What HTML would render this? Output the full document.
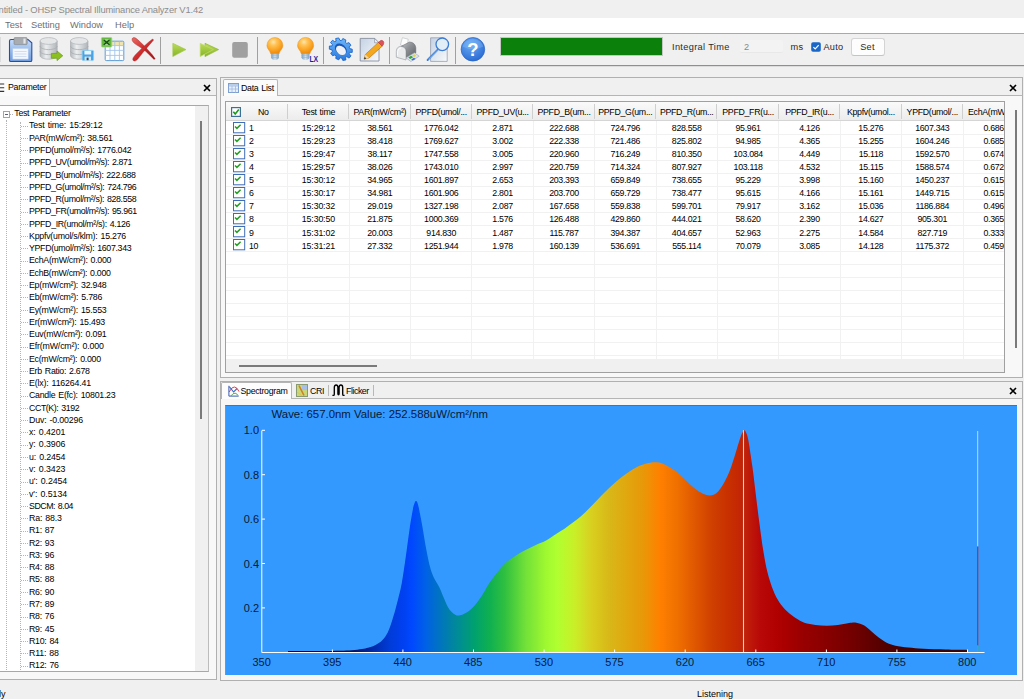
<!DOCTYPE html>
<html lang="en"><head><meta charset="utf-8"><title>OHSP Spectral Illuminance Analyzer V1.42</title>
<style>
html,body{margin:0;padding:0;}
body{width:1024px;height:699px;overflow:hidden;background:#f0f0f0;position:relative;font-family:"Liberation Sans",sans-serif;font-size:8.8px;color:#000;}
.a{position:absolute;white-space:nowrap;}
.t{position:absolute;white-space:nowrap;font-size:8.8px;letter-spacing:-0.3px;word-spacing:0.8px;line-height:12px;color:#000;}
#title{left:-8px;top:3.5px;font-size:9.4px;color:#8c8c8c;letter-spacing:-0.16px;line-height:12px;}
#menubar{left:0;top:18px;width:1024px;height:15px;background:#fff;}
.menu{position:absolute;top:1px;font-size:9.3px;color:#707070;line-height:12px;}
#tbtop{left:0;top:33px;width:1024px;height:1px;background:#a9a9a9;}
#tbbot{left:0;top:65px;width:1024px;height:1px;background:#8f8f8f;}
#tbbot2{left:0;top:66px;width:1024px;height:1px;background:#dcdcdc;}
.sep{position:absolute;top:37px;width:1px;height:27px;background:#a0a0a0;}
/* left panel */
#lp{left:-1px;top:78px;width:218px;height:602px;border:1px solid #b0b0b0;box-sizing:border-box;background:#f0f0f0;}
#lptab{left:0;top:79px;width:50px;height:17px;background:#fbfbfb;border-right:1px solid #b5b5b5;box-sizing:border-box;}
#lp:after{content:"";position:absolute;left:50px;top:16px;width:166px;height:1px;background:#b5b5b5;}
#lp:before{content:"";position:absolute;left:0;top:17px;width:216px;height:583px;background:#f8f8f8;}
.xbtn{position:absolute;width:8px;height:8px;}
.xbtn svg{display:block;}
#tree{left:-1px;top:104.5px;width:210px;height:567.5px;border:1px solid #a8a8a8;border-right-color:#bcbcbc;box-sizing:border-box;background:#fff;overflow:hidden;}
#tree .t{margin-left:1px;margin-top:-1.5px;}
.vl{position:absolute;width:0;border-left:1px dotted #b4b4b4;}
.hl{position:absolute;height:0;border-top:1px dotted #b4b4b4;}
.box{position:absolute;width:7px;height:7px;border:1px solid #a4a4a4;box-sizing:border-box;background:#fff;}
.box i{position:absolute;left:1px;top:2px;width:3px;height:1px;background:#5a6070;}
#tsb{left:195px;top:0;width:14px;height:566px;background:#f0f0f0;}
.thumb{position:absolute;width:1.5px;background:#7a7a7a;}
/* right panels */
#rp1{left:220px;top:77px;width:803px;height:301px;border:1px solid #b0b0b0;box-sizing:border-box;background:#f0f0f0;}
#rp1:before{content:"";position:absolute;left:0;top:18px;width:801px;height:281px;background:#f8f8f8;}
#rp1:after{content:"";position:absolute;left:57px;top:17px;width:745px;height:1px;background:#b5b5b5;}
#dltab{left:223px;top:79px;width:55px;height:17px;background:#fbfbfb;border:1px solid #b5b5b5;border-bottom:none;box-sizing:border-box;border-radius:2px 2px 0 0;}
#list{left:225px;top:101px;width:780px;height:272px;border:1px solid #a0a0a0;box-sizing:border-box;background:#fff;overflow:hidden;}
#lhead{left:0;top:0;width:780px;height:19px;background:linear-gradient(#fafafa,#ececec);border-bottom:1px solid #d5d5d5;box-sizing:border-box;}
.hc{top:3.8px;text-align:center;}
.cc{text-align:center;}
.hsep{position:absolute;top:2px;width:1px;height:15px;background:#cfcfcf;}
.gv{position:absolute;top:19px;width:1px;height:238px;background:#f1f1f1;}
.gh{position:absolute;left:0;width:780px;height:1px;background:#f1f1f1;}
#hsb{left:0;top:257px;width:778px;height:13px;background:#f0f0f0;}
.hthumb{position:absolute;left:13px;top:6px;width:138px;height:1.5px;background:#7a7a7a;}
#rp2{left:220px;top:381px;width:803px;height:300px;border:1px solid #b0b0b0;box-sizing:border-box;background:#f0f0f0;}
#rp2:after{content:"";position:absolute;left:0px;top:16px;width:802px;height:1px;background:#b5b5b5;}
#cwhite{left:221px;top:399px;width:801px;height:281px;background:#f8f6f4;}
#sptab{left:220.5px;top:382px;width:71.5px;height:17px;background:#fdfdfd;border:1px solid #b5b5b5;border-bottom:none;box-sizing:border-box;border-radius:2px 2px 0 0;}
#chart{border-top:1px solid #5a6f8c;border-left:1px solid #7f93ad;box-sizing:content-box;}
.tb{font-size:9.2px;line-height:12px;color:#2a2a2a;}
</style></head>
<body>
<div id="title" class="a">Untitled - OHSP Spectral Illuminance Analyzer V1.42</div>
<div id="menubar" class="a"><span class="menu" style="left:5px">Test</span><span class="menu" style="left:31px">Setting</span><span class="menu" style="left:70px">Window</span><span class="menu" style="left:115px">Help</span></div>
<div id="tbtop" class="a"></div><div id="tbbot" class="a"></div><div id="tbbot2" class="a"></div>
<div class="sep" style="left:160px"></div><div class="sep" style="left:257px"></div><div class="sep" style="left:323px"></div><div class="sep" style="left:389px"></div><div class="sep" style="left:455px"></div>
<svg id="tbicons" class="a" style="left:0;top:34px" width="500" height="31" viewBox="0 34 500 31">
<defs>
<linearGradient id="gfl" x1="0" y1="0" x2="0" y2="1"><stop offset="0" stop-color="#c4dcfa"/><stop offset="1" stop-color="#6c9ce0"/></linearGradient>
<linearGradient id="gcy" x1="0" y1="0" x2="1" y2="0"><stop offset="0" stop-color="#b4b8bc"/><stop offset=".35" stop-color="#eceef0"/><stop offset="1" stop-color="#b0b4b8"/></linearGradient>
<linearGradient id="ggr" x1="0" y1="0" x2="0" y2="1"><stop offset="0" stop-color="#bcdc5c"/><stop offset="1" stop-color="#86b424"/></linearGradient>
<radialGradient id="gbu" cx=".4" cy=".28" r=".7"><stop offset="0" stop-color="#ffe6b0"/><stop offset=".3" stop-color="#ffc458"/><stop offset=".7" stop-color="#fba424"/><stop offset="1" stop-color="#ee8c10"/></radialGradient>
<linearGradient id="gbb" x1="0" y1="0" x2="1" y2="0"><stop offset="0" stop-color="#7aa0c0"/><stop offset=".5" stop-color="#cfe2f2"/><stop offset="1" stop-color="#7aa0c0"/></linearGradient>
<linearGradient id="ggear" x1="0" y1="0" x2="1" y2="1"><stop offset="0" stop-color="#7cc4ff"/><stop offset="1" stop-color="#1c6cd8"/></linearGradient>
<radialGradient id="ghelp" cx=".4" cy=".3" r=".8"><stop offset="0" stop-color="#6cacf4"/><stop offset="1" stop-color="#2264d0"/></radialGradient>
<linearGradient id="gdoc" x1="0" y1="0" x2="1" y2="1"><stop offset="0" stop-color="#c4d2e4"/><stop offset="1" stop-color="#f8fafc"/></linearGradient>
<linearGradient id="gred" x1="0" y1="0" x2="1" y2="1"><stop offset="0" stop-color="#ec6c64"/><stop offset=".5" stop-color="#cc2c2c"/><stop offset="1" stop-color="#a01010"/></linearGradient>
<linearGradient id="gprt" x1="0" y1="0" x2="1" y2="1"><stop offset="0" stop-color="#c4c8cc"/><stop offset=".45" stop-color="#8c9094"/><stop offset="1" stop-color="#5c6064"/></linearGradient>
</defs>
<!-- grip -->
<rect x="0" y="37" width="1" height="25" fill="#dcdcdc"/>
<!-- floppy save -->
<g>
<path d="M11 39.5H28L31.8 42.8V60.2Q31.8 61.5 30.5 61.5H10.8Q9.5 61.5 9.5 60.2V41Q9.5 39.5 11 39.5Z" fill="url(#gfl)" stroke="#2c4c9c" stroke-width="1.1"/>
<rect x="14" y="37.6" width="13.2" height="7" rx="1" fill="#a8acb0" stroke="#808488" stroke-width=".6"/>
<rect x="23.4" y="38.6" width="2.2" height="5" fill="#e4e6e8"/>
<rect x="12.8" y="48.3" width="15.4" height="10.8" fill="#f4f8fe" stroke="#b4c8ec" stroke-width=".6"/>
<path d="M14.5 51.5H26.5M14.5 54H26.5M14.5 56.5H26.5" stroke="#c0d0ea" stroke-width=".7"/>
</g>
<!-- database + arrow -->
<g>
<path d="M40 41V55.5C40 57.6 43.9 59.2 48.6 59.2S57.2 57.6 57.2 55.5V41Z" fill="url(#gcy)" stroke="#a4a8ac" stroke-width=".6"/>
<path d="M40 46C40 48 43.9 49.6 48.6 49.6S57.2 48 57.2 46M40 51C40 53 43.9 54.6 48.6 54.6S57.2 53 57.2 51" fill="none" stroke="#a8acb0" stroke-width=".8"/>
<ellipse cx="48.6" cy="41" rx="8.6" ry="3.4" fill="#e4e6e8" stroke="#b0b4b8" stroke-width=".7"/>
<path d="M51.3 53.4H57V51L62.8 55.8L57 60.6V58.2H51.3Z" fill="#8cc020" stroke="#6c9c14" stroke-width=".7"/>
</g>
<!-- database + floppy -->
<g>
<path d="M70.5 41V55.5C70.5 57.6 74.4 59.2 79.2 59.2S88 57.6 88 55.5V41Z" fill="url(#gcy)" stroke="#a4a8ac" stroke-width=".6"/>
<path d="M70.5 46C70.5 48 74.4 49.6 79.2 49.6S88 48 88 46M70.5 51C70.5 53 74.4 54.6 79.2 54.6S88 53 88 51" fill="none" stroke="#a8acb0" stroke-width=".8"/>
<ellipse cx="79.2" cy="41" rx="8.7" ry="3.4" fill="#e4e6e8" stroke="#b0b4b8" stroke-width=".7"/>
<rect x="82.2" y="50.4" width="11.4" height="10.2" rx="1" fill="#48a4e4" stroke="#8cd0f4" stroke-width=".7"/>
<rect x="84.4" y="50.9" width="6.8" height="3.6" fill="#e8f4fc"/>
<rect x="84.6" y="56.6" width="6.4" height="4" fill="#d0e8f8"/><rect x="86.6" y="57.6" width="2" height="2.6" fill="#384858"/>
</g>
<!-- excel table -->
<g>
<rect x="105.2" y="41.2" width="18.6" height="19.4" rx="1" fill="#fcfeff" stroke="#5c9cd4" stroke-width="1"/>
<rect x="106" y="42" width="17" height="3.4" fill="#f0e4b0"/>
<path d="M105.5 45.6H123.5M105.5 50.4H123.5M105.5 55.4H123.5M110 41.5V60.3M114.8 41.5V60.3M119.4 41.5V60.3" stroke="#a4c4e8" stroke-width=".9"/>
<rect x="101.4" y="37.5" width="10.4" height="9.6" rx="1" fill="#64b840" stroke="#a4d884" stroke-width=".8"/>
<path d="M103.2 40H110M103.2 44.8H110" stroke="#d8f0c8" stroke-width=".9"/><path d="M103.6 39.8L109.6 45M109.6 39.8L103.6 45" stroke="#184c18" stroke-width="1.3"/>
</g>
<!-- red X -->
<g>
<path d="M132.1 38.9C132.6 37.4 134.6 37.2 136 38.3C139 40.6 142 43.8 144.8 46.4L152.3 54.8L155.2 58.8L154 59.4L148.5 54C146 51.6 144 49.8 141.9 48.3L135.4 44.1C133.6 42.8 131.6 40.6 132.1 38.9Z" fill="url(#gred)" stroke="#a01c1c" stroke-width=".4"/>
<path d="M152.6 39L153.6 40L148.5 45.9L142.9 52.6L138.2 58.6C137 60 135.6 61.2 134.2 61C132.6 60.8 132.4 59 133.5 57.2C134.6 55.6 135.8 54.4 137.2 53L142.9 47.3L148.5 42.2Z" fill="url(#gred)" stroke="#a01c1c" stroke-width=".4"/>
</g>
<!-- play -->
<path d="M172.8 43.3L186 49.6L172.8 56.6Z" fill="url(#ggr)" stroke="#a0c848" stroke-width=".6" stroke-linejoin="round"/>
<!-- ff -->
<path d="M205 43.3L218.6 49.6L205 56.6Z" fill="url(#ggr)" stroke="#88b028" stroke-width=".6" stroke-linejoin="round"/>
<path d="M200.2 43.3L213.4 49.6L200.2 56.6Z" fill="url(#ggr)" stroke="#c4dc70" stroke-width=".7" stroke-linejoin="round"/>
<!-- stop -->
<rect x="232.2" y="42.1" width="15.6" height="15.6" rx="2" fill="#a0a0a0"/>
<!-- bulb -->
<g>
<path d="M271.2 53H278.8V57.2C278.8 59 277.2 59.9 275 59.9S271.2 59 271.2 57.2Z" fill="url(#gbb)"/>
<path d="M270.8 55.2H279.2M271 57.4H279" stroke="#8cb0cc" stroke-width=".6"/>
<path d="M274.9 37.5a8 8 0 0 1 8 8c0 3.4-3.2 5-3.7 8.2h-8.6c-.5-3.2-3.7-4.8-3.7-8.2a8 8 0 0 1 8-8z" fill="url(#gbu)" stroke="#ec9420" stroke-width=".5"/>
</g>
<!-- bulb LX -->
<g>
<path d="M301.6 53H309.4V57.2C309.4 59 307.6 59.9 305.5 59.9S301.6 59 301.6 57.2Z" fill="url(#gbb)"/>
<path d="M301.2 55.2H309.2M301.4 57.4H309" stroke="#8cb0cc" stroke-width=".6"/>
<path d="M305.6 37.4a8.1 8.1 0 0 1 8.1 8.1c0 3.4-3.2 5-3.7 8.2h-8.8c-.5-3.2-3.7-4.8-3.7-8.2a8.1 8.1 0 0 1 8.1-8.1z" fill="url(#gbu)" stroke="#ec9420" stroke-width=".5"/>
<text x="309.4" y="61.7" font-family="'Liberation Sans',sans-serif" font-weight="bold" font-size="8.2px" fill="#1c1ca4" textLength="8.8" lengthAdjust="spacingAndGlyphs">LX</text>
</g>
<!-- gear -->
<g transform="translate(340.8 49.2) rotate(40) scale(1 .86)">
<path d="M9.4 -2.2L12.1 -1.7L12.1 1.7L9.4 2.2L8.8 3.8L10.8 5.7L8.8 8.5L6.3 7.2L4.9 8.2L5.3 11.0L2.1 12.0L0.8 9.6L-0.8 9.6L-2.1 12.0L-5.3 11.0L-4.9 8.2L-6.3 7.2L-8.8 8.5L-10.8 5.7L-8.8 3.8L-9.4 2.2L-12.1 1.7L-12.1 -1.7L-9.4 -2.2L-8.8 -3.8L-10.8 -5.7L-8.8 -8.5L-6.3 -7.2L-4.9 -8.2L-5.3 -11.0L-2.1 -12.0L-0.8 -9.6L0.8 -9.6L2.1 -12.0L5.3 -11.0L4.9 -8.2L6.3 -7.2L8.8 -8.5L10.8 -5.7L8.8 -3.8Z" fill="url(#ggear)" stroke="#1c68cc" stroke-width=".9" stroke-linejoin="round"/>
<ellipse cx="0" cy="0" rx="6.6" ry="5.6" fill="#1858b8"/>
<ellipse cx=".9" cy=".9" rx="5.6" ry="4.6" fill="#eef1f5"/>
</g>
<!-- doc + pencil -->
<g>
<path d="M360.2 38.4H374.6L379 42.8V61H360.2Z" fill="url(#gdoc)" stroke="#7c8494" stroke-width=".8"/>
<path d="M374.6 38.4V42.8H379Z" fill="#eef2f8" stroke="#7c8494" stroke-width=".6"/>
<path d="M364 59.2L365.4 54.4L378.4 42.4L382.2 46.2L369 58Z" fill="#f4a820" stroke="#a86c10" stroke-width=".6"/>
<path d="M378.4 42.4L380.6 40.6Q382 39.8 383.2 41.2L383.8 42.4Q384.2 43.8 382.2 46.2Z" fill="#e05058" stroke="#a83038" stroke-width=".5"/>
<path d="M364 59.2L365.4 54.4L369 58Z" fill="#f0d8a8"/><path d="M364 59.2L364.7 56.9L366.3 58.5Z" fill="#202020"/>
</g>
<!-- printer -->
<g>
<path d="M400.4 45L402.4 37.7L408.2 39.2L407.2 46.5Z" fill="#fdfdfd" stroke="#b8bcc0" stroke-width=".6"/>
<path d="M401 46.4L409.6 42Q415.2 42.4 415.8 47.8V52.8L406 58.2V51Q405.6 46.8 401 46.4Z" fill="url(#gprt)" stroke="#5c6064" stroke-width=".5"/>
<path d="M396.3 51.2Q396.6 46.6 401 46.4Q405.6 46.8 406 51V60L396.3 57.2Z" fill="#e9ebed" stroke="#94989c" stroke-width=".6"/>
<path d="M397.6 55.4V51.6Q398 48.2 401 48" fill="none" stroke="#fff" stroke-width=".8"/>
<path d="M406 57.8L414.4 52.8L419.2 56.2L410.8 61.5Z" fill="#dde4f0" stroke="#98a2b6" stroke-width=".6"/>
<path d="M408.2 57.6L411.2 55.8L413.2 57.2L410.2 59Z" fill="#34a834"/><path d="M412 55.4L414.2 54.2L416.4 55.8L414.2 57Z" fill="#e4d43c"/><path d="M411.2 59.4L414 57.8L415.6 58.9L412.8 60.5Z" fill="#3c6cd4"/>
</g>
<!-- preview (doc + magnifier) -->
<g>
<path d="M430.6 37.8H443.4L447.2 41.6V61.4H430.6Z" fill="url(#gdoc)" stroke="#8c94a4" stroke-width=".7"/>
<circle cx="442.3" cy="44.3" r="6.3" fill="#e2eef8" fill-opacity=".85" stroke="#3c7cd4" stroke-width="1.3"/>
<path d="M438 49.4L427.6 60" stroke="#3c7cd4" stroke-width="1.9" stroke-linecap="round"/>
<path d="M438 49.6L428.4 59.4" stroke="#9cc4f0" stroke-width=".7"/>
</g>
<!-- help -->
<g>
<circle cx="472.9" cy="49.3" r="11.8" fill="url(#ghelp)" stroke="#2a64c4" stroke-width=".7"/>
<path d="M462.4 46.6A11 11 0 0 1 483.4 46.6Q473 52 462.4 46.6Z" fill="#8cc0f8" fill-opacity=".35"/>
<text x="472.9" y="56" text-anchor="middle" font-family="'Liberation Sans',sans-serif" font-weight="bold" font-size="18.5px" fill="#fff">?</text>
</g>
</svg>
<div class="a" style="left:500px;top:37px;width:163px;height:19px;background:#0b800b;border:1px solid #c4c8c4;box-sizing:border-box"></div>
<span class="a tb" style="left:672px;top:41px;letter-spacing:.35px">Integral Time</span>
<div class="a" style="left:740px;top:40px;width:43px;height:13px;background:#f3f3f3;border-bottom:1px solid #e8e8e8;box-sizing:border-box;border-radius:2px"></div>
<span class="a tb" style="left:744px;top:41px;color:#8a8a8a">2</span>
<span class="a tb" style="left:790.5px;top:41px;letter-spacing:.3px">ms</span>
<svg class="a" style="left:811px;top:42px" width="10" height="10" viewBox="0 0 10 10"><rect x=".2" y=".2" width="9.6" height="9.6" rx="1.8" fill="#1a66c8"/><path d="M2.4 5.1L4.2 6.9L7.7 3.2" fill="none" stroke="#fff" stroke-width="1.2"/></svg>
<span class="a tb" style="left:823.5px;top:41px;letter-spacing:.2px">Auto</span>
<div class="a" style="left:850.5px;top:38px;width:34px;height:17.5px;background:#fdfdfd;border:1px solid #d4d4d4;border-bottom-color:#c4c4c4;box-sizing:border-box;border-radius:3px"></div>
<span class="a tb" style="left:850.5px;top:41px;width:34px;text-align:center;letter-spacing:.2px">Set</span>
<div id="lp" class="a"></div>
<div id="lptab" class="a"><svg class="a" style="left:0;top:4.4px" width="5" height="10" viewBox="0 0 5 10"><path d="M0 1h4.2M0 4.7h4.2M0 8.4h4.2" stroke="#333" stroke-width="1.1"/></svg><span class="t" style="left:8px;top:2px">Parameter</span></div>
<div class="xbtn" style="left:203.3px;top:83.5px"><svg width="8" height="8" viewBox="0 0 8 8"><path d="M1 1L7 7M7 1L1 7" stroke="#000" stroke-width="1.7"/></svg></div>
<div id="tree" class="a">
<div class="vl" style="left:6px;top:14.2px;height:580.0px"></div><div class="vl" style="left:20px;top:16.2px;height:580.0px"></div><div class="box" style="left:3px;top:5.0px"><i></i></div><div class="hl" style="left:10px;top:8.0px;width:3px"></div><span class="t" style="left:13.3px;top:3.20px">Test Parameter</span>
<div class="hl" style="left:21px;top:20.2px;width:6.5px"></div><span class="t" style="left:28px;top:15.47px;letter-spacing:-0.13px">Test time: 15:29:12</span>
<div class="hl" style="left:21px;top:32.4px;width:6.5px"></div><span class="t" style="left:28px;top:27.74px;letter-spacing:-0.26px">PAR(mW/cm²): 38.561</span>
<div class="hl" style="left:21px;top:44.7px;width:6.5px"></div><span class="t" style="left:28px;top:40.01px;letter-spacing:-0.32px">PPFD(umol/m²/s): 1776.042</span>
<div class="hl" style="left:21px;top:57.0px;width:6.5px"></div><span class="t" style="left:28px;top:52.28px;letter-spacing:-0.39px">PPFD_UV(umol/m²/s): 2.871</span>
<div class="hl" style="left:21px;top:69.2px;width:6.5px"></div><span class="t" style="left:28px;top:64.55px;letter-spacing:-0.37px">PPFD_B(umol/m²/s): 222.688</span>
<div class="hl" style="left:21px;top:81.5px;width:6.5px"></div><span class="t" style="left:28px;top:76.82px;letter-spacing:-0.38px">PPFD_G(umol/m²/s): 724.796</span>
<div class="hl" style="left:21px;top:93.8px;width:6.5px"></div><span class="t" style="left:28px;top:89.09px;letter-spacing:-0.36px">PPFD_R(umol/m²/s): 828.558</span>
<div class="hl" style="left:21px;top:106.1px;width:6.5px"></div><span class="t" style="left:28px;top:101.36px;letter-spacing:-0.36px">PPFD_FR(umol/m²/s): 95.961</span>
<div class="hl" style="left:21px;top:118.3px;width:6.5px"></div><span class="t" style="left:28px;top:113.63px;letter-spacing:-0.33px">PPFD_IR(umol/m²/s): 4.126</span>
<div class="hl" style="left:21px;top:130.6px;width:6.5px"></div><span class="t" style="left:28px;top:125.90px;letter-spacing:-0.24px">Kppfv(umol/s/klm): 15.276</span>
<div class="hl" style="left:21px;top:142.9px;width:6.5px"></div><span class="t" style="left:28px;top:138.17px;letter-spacing:-0.32px">YPFD(umol/m²/s): 1607.343</span>
<div class="hl" style="left:21px;top:155.1px;width:6.5px"></div><span class="t" style="left:28px;top:150.44px;letter-spacing:-0.27px">EchA(mW/cm²): 0.000</span>
<div class="hl" style="left:21px;top:167.4px;width:6.5px"></div><span class="t" style="left:28px;top:162.71px;letter-spacing:-0.30px">EchB(mW/cm²): 0.000</span>
<div class="hl" style="left:21px;top:179.7px;width:6.5px"></div><span class="t" style="left:28px;top:174.98px;letter-spacing:-0.25px">Ep(mW/cm²): 32.948</span>
<div class="hl" style="left:21px;top:191.9px;width:6.5px"></div><span class="t" style="left:28px;top:187.25px;letter-spacing:-0.23px">Eb(mW/cm²): 5.786</span>
<div class="hl" style="left:21px;top:204.2px;width:6.5px"></div><span class="t" style="left:28px;top:199.52px;letter-spacing:-0.22px">Ey(mW/cm²): 15.553</span>
<div class="hl" style="left:21px;top:216.5px;width:6.5px"></div><span class="t" style="left:28px;top:211.79px;letter-spacing:-0.22px">Er(mW/cm²): 15.493</span>
<div class="hl" style="left:21px;top:228.8px;width:6.5px"></div><span class="t" style="left:28px;top:224.06px;letter-spacing:-0.22px">Euv(mW/cm²): 0.091</span>
<div class="hl" style="left:21px;top:241.0px;width:6.5px"></div><span class="t" style="left:28px;top:236.33px;letter-spacing:-0.16px">Efr(mW/cm²): 0.000</span>
<div class="hl" style="left:21px;top:253.3px;width:6.5px"></div><span class="t" style="left:28px;top:248.60px;letter-spacing:-0.28px">Ec(mW/cm²): 0.000</span>
<div class="hl" style="left:21px;top:265.6px;width:6.5px"></div><span class="t" style="left:28px;top:260.87px;letter-spacing:-0.28px">Erb Ratio: 2.678</span>
<div class="hl" style="left:21px;top:277.8px;width:6.5px"></div><span class="t" style="left:28px;top:273.14px;letter-spacing:-0.17px">E(lx): 116264.41</span>
<div class="hl" style="left:21px;top:290.1px;width:6.5px"></div><span class="t" style="left:28px;top:285.41px;letter-spacing:-0.26px">Candle E(fc): 10801.23</span>
<div class="hl" style="left:21px;top:302.4px;width:6.5px"></div><span class="t" style="left:28px;top:297.68px;letter-spacing:-0.41px">CCT(K): 3192</span>
<div class="hl" style="left:21px;top:314.6px;width:6.5px"></div><span class="t" style="left:28px;top:309.95px;letter-spacing:-0.17px">Duv: -0.00296</span>
<div class="hl" style="left:21px;top:326.9px;width:6.5px"></div><span class="t" style="left:28px;top:322.22px;letter-spacing:-0.08px">x: 0.4201</span>
<div class="hl" style="left:21px;top:339.2px;width:6.5px"></div><span class="t" style="left:28px;top:334.49px;letter-spacing:-0.08px">y: 0.3906</span>
<div class="hl" style="left:21px;top:351.5px;width:6.5px"></div><span class="t" style="left:28px;top:346.76px;letter-spacing:-0.13px">u: 0.2454</span>
<div class="hl" style="left:21px;top:363.7px;width:6.5px"></div><span class="t" style="left:28px;top:359.03px;letter-spacing:-0.08px">v: 0.3423</span>
<div class="hl" style="left:21px;top:376.0px;width:6.5px"></div><span class="t" style="left:28px;top:371.30px;letter-spacing:-0.11px">u': 0.2454</span>
<div class="hl" style="left:21px;top:388.3px;width:6.5px"></div><span class="t" style="left:28px;top:383.57px;letter-spacing:-0.06px">v': 0.5134</span>
<div class="hl" style="left:21px;top:400.5px;width:6.5px"></div><span class="t" style="left:28px;top:395.84px;letter-spacing:-0.47px">SDCM: 8.04</span>
<div class="hl" style="left:21px;top:412.8px;width:6.5px"></div><span class="t" style="left:28px;top:408.11px;letter-spacing:-0.17px">Ra: 88.3</span>
<div class="hl" style="left:21px;top:425.1px;width:6.5px"></div><span class="t" style="left:28px;top:420.38px;letter-spacing:-0.29px">R1: 87</span>
<div class="hl" style="left:21px;top:437.3px;width:6.5px"></div><span class="t" style="left:28px;top:432.65px;letter-spacing:-0.29px">R2: 93</span>
<div class="hl" style="left:21px;top:449.6px;width:6.5px"></div><span class="t" style="left:28px;top:444.92px;letter-spacing:-0.29px">R3: 96</span>
<div class="hl" style="left:21px;top:461.9px;width:6.5px"></div><span class="t" style="left:28px;top:457.19px;letter-spacing:-0.29px">R4: 88</span>
<div class="hl" style="left:21px;top:474.2px;width:6.5px"></div><span class="t" style="left:28px;top:469.46px;letter-spacing:-0.29px">R5: 88</span>
<div class="hl" style="left:21px;top:486.4px;width:6.5px"></div><span class="t" style="left:28px;top:481.73px;letter-spacing:-0.29px">R6: 90</span>
<div class="hl" style="left:21px;top:498.7px;width:6.5px"></div><span class="t" style="left:28px;top:494.00px;letter-spacing:-0.29px">R7: 89</span>
<div class="hl" style="left:21px;top:511.0px;width:6.5px"></div><span class="t" style="left:28px;top:506.27px;letter-spacing:-0.29px">R8: 76</span>
<div class="hl" style="left:21px;top:523.2px;width:6.5px"></div><span class="t" style="left:28px;top:518.54px;letter-spacing:-0.29px">R9: 45</span>
<div class="hl" style="left:21px;top:535.5px;width:6.5px"></div><span class="t" style="left:28px;top:530.81px;letter-spacing:-0.29px">R10: 84</span>
<div class="hl" style="left:21px;top:547.8px;width:6.5px"></div><span class="t" style="left:28px;top:543.08px;letter-spacing:-0.19px">R11: 88</span>
<div class="hl" style="left:21px;top:560.1px;width:6.5px"></div><span class="t" style="left:28px;top:555.35px;letter-spacing:-0.29px">R12: 76</span>
<div id="tsb" class="a"><div class="thumb" style="left:5.2px;top:15px;height:298px"></div></div>
</div>
<div id="rp1" class="a"></div>
<div id="dltab" class="a"><svg class="a" style="left:4px;top:3px" width="11" height="10" viewBox="0 0 11 10"><rect x=".5" y=".5" width="10" height="9" fill="#e8f0fa" stroke="#7f9fd0"/><path d="M.5 3h10M4 3v6.5M7.5 3v6.5M.5 6h10" stroke="#9fb8e0" stroke-width=".8"/><rect x="1" y="1" width="9" height="2" fill="#b8cdea"/></svg><span class="t" style="left:17px;top:2px">Data List</span></div>
<div class="xbtn" style="left:1008.8px;top:83.6px"><svg width="8" height="8" viewBox="0 0 8 8"><path d="M1 1L7 7M7 1L1 7" stroke="#000" stroke-width="1.7"/></svg></div>
<div id="list" class="a">
<div id="lhead" class="a"><span class="t hc" style="left:15.0px;width:44.7px">No</span><div class="hsep" style="left:60.7px"></div><span class="t hc" style="left:61.7px;width:61.4px">Test time</span><div class="hsep" style="left:122.1px"></div><span class="t hc" style="left:123.1px;width:61.4px">PAR(mW/cm²)</span><div class="hsep" style="left:183.5px"></div><span class="t hc" style="left:184.5px;width:61.4px">PPFD(umol/...</span><div class="hsep" style="left:244.9px"></div><span class="t hc" style="left:245.9px;width:61.4px">PPFD_UV(u...</span><div class="hsep" style="left:306.3px"></div><span class="t hc" style="left:307.3px;width:61.4px">PPFD_B(um...</span><div class="hsep" style="left:367.6px"></div><span class="t hc" style="left:368.6px;width:61.4px">PPFD_G(um...</span><div class="hsep" style="left:429.0px"></div><span class="t hc" style="left:430.0px;width:61.4px">PPFD_R(um...</span><div class="hsep" style="left:490.4px"></div><span class="t hc" style="left:491.4px;width:61.4px">PPFD_FR(u...</span><div class="hsep" style="left:551.8px"></div><span class="t hc" style="left:552.8px;width:61.4px">PPFD_IR(u...</span><div class="hsep" style="left:613.2px"></div><span class="t hc" style="left:614.2px;width:61.4px">Kppfv(umol...</span><div class="hsep" style="left:674.6px"></div><span class="t hc" style="left:675.6px;width:61.4px">YPFD(umol/...</span><div class="hsep" style="left:736.0px"></div><span class="t" style="left:742.0px;top:3.8px">EchA(mW/...</span></div>
<div class="gv" style="left:61.2px"></div><div class="gv" style="left:122.6px"></div><div class="gv" style="left:184.0px"></div><div class="gv" style="left:245.4px"></div><div class="gv" style="left:306.8px"></div><div class="gv" style="left:368.1px"></div><div class="gv" style="left:429.5px"></div><div class="gv" style="left:490.9px"></div><div class="gv" style="left:552.3px"></div><div class="gv" style="left:613.7px"></div><div class="gv" style="left:675.1px"></div><div class="gv" style="left:736.5px"></div><div class="gh" style="top:31.9px"></div><div class="gh" style="top:44.9px"></div><div class="gh" style="top:57.9px"></div><div class="gh" style="top:70.9px"></div><div class="gh" style="top:83.9px"></div><div class="gh" style="top:96.9px"></div><div class="gh" style="top:109.9px"></div><div class="gh" style="top:122.9px"></div><div class="gh" style="top:135.9px"></div><div class="gh" style="top:148.9px"></div><div class="gh" style="top:161.9px"></div><div class="gh" style="top:174.9px"></div><div class="gh" style="top:187.9px"></div><div class="gh" style="top:200.9px"></div><div class="gh" style="top:213.9px"></div><div class="gh" style="top:226.9px"></div><div class="gh" style="top:239.9px"></div><div class="gh" style="top:252.9px"></div>
<div class="a" style="left:5px;top:5px"><svg width="10" height="10" viewBox="0 0 10 10"><rect x=".6" y=".6" width="8.8" height="8.8" fill="#fff" stroke="#3c6f9a" stroke-width="1.2"/><path d="M2.3 4.8L4.2 6.9L7.8 2.4" fill="none" stroke="#1c9a1c" stroke-width="1.6"/></svg></div>
<div class="a" style="left:7px;top:20.00px"><svg width="13" height="12" viewBox="0 0 13 12"><rect x=".5" y=".5" width="11.2" height="10.3" fill="#fff" stroke="#3f6db5" stroke-width="1"/><path d="M2 4.5L3.9 6.4L7.6 2.8" fill="none" stroke="#22a022" stroke-width="1.5"/></svg></div><span class="t" style="left:23px;top:20.20px">1</span><span class="t cc" style="left:61.7px;width:61.4px;top:20.20px;letter-spacing:-0.15px">15:29:12</span><span class="t cc" style="left:123.1px;width:61.4px;top:20.20px">38.561</span><span class="t cc" style="left:184.5px;width:61.4px;top:20.20px">1776.042</span><span class="t cc" style="left:245.9px;width:61.4px;top:20.20px">2.871</span><span class="t cc" style="left:307.3px;width:61.4px;top:20.20px">222.688</span><span class="t cc" style="left:368.6px;width:61.4px;top:20.20px">724.796</span><span class="t cc" style="left:430.0px;width:61.4px;top:20.20px">828.558</span><span class="t cc" style="left:491.4px;width:61.4px;top:20.20px">95.961</span><span class="t cc" style="left:552.8px;width:61.4px;top:20.20px">4.126</span><span class="t cc" style="left:614.2px;width:61.4px;top:20.20px">15.276</span><span class="t cc" style="left:675.6px;width:61.4px;top:20.20px">1607.343</span><span class="t cc" style="left:737.0px;width:61.4px;top:20.20px">0.686</span>
<div class="a" style="left:7px;top:33.03px"><svg width="13" height="12" viewBox="0 0 13 12"><rect x=".5" y=".5" width="11.2" height="10.3" fill="#fff" stroke="#3f6db5" stroke-width="1"/><path d="M2 4.5L3.9 6.4L7.6 2.8" fill="none" stroke="#22a022" stroke-width="1.5"/></svg></div><span class="t" style="left:23px;top:33.24px">2</span><span class="t cc" style="left:61.7px;width:61.4px;top:33.24px;letter-spacing:-0.15px">15:29:23</span><span class="t cc" style="left:123.1px;width:61.4px;top:33.24px">38.418</span><span class="t cc" style="left:184.5px;width:61.4px;top:33.24px">1769.627</span><span class="t cc" style="left:245.9px;width:61.4px;top:33.24px">3.002</span><span class="t cc" style="left:307.3px;width:61.4px;top:33.24px">222.338</span><span class="t cc" style="left:368.6px;width:61.4px;top:33.24px">721.486</span><span class="t cc" style="left:430.0px;width:61.4px;top:33.24px">825.802</span><span class="t cc" style="left:491.4px;width:61.4px;top:33.24px">94.985</span><span class="t cc" style="left:552.8px;width:61.4px;top:33.24px">4.365</span><span class="t cc" style="left:614.2px;width:61.4px;top:33.24px">15.255</span><span class="t cc" style="left:675.6px;width:61.4px;top:33.24px">1604.246</span><span class="t cc" style="left:737.0px;width:61.4px;top:33.24px">0.685</span>
<div class="a" style="left:7px;top:46.06px"><svg width="13" height="12" viewBox="0 0 13 12"><rect x=".5" y=".5" width="11.2" height="10.3" fill="#fff" stroke="#3f6db5" stroke-width="1"/><path d="M2 4.5L3.9 6.4L7.6 2.8" fill="none" stroke="#22a022" stroke-width="1.5"/></svg></div><span class="t" style="left:23px;top:46.28px">3</span><span class="t cc" style="left:61.7px;width:61.4px;top:46.28px;letter-spacing:-0.15px">15:29:47</span><span class="t cc" style="left:123.1px;width:61.4px;top:46.28px">38.117</span><span class="t cc" style="left:184.5px;width:61.4px;top:46.28px">1747.558</span><span class="t cc" style="left:245.9px;width:61.4px;top:46.28px">3.005</span><span class="t cc" style="left:307.3px;width:61.4px;top:46.28px">220.960</span><span class="t cc" style="left:368.6px;width:61.4px;top:46.28px">716.249</span><span class="t cc" style="left:430.0px;width:61.4px;top:46.28px">810.350</span><span class="t cc" style="left:491.4px;width:61.4px;top:46.28px">103.084</span><span class="t cc" style="left:552.8px;width:61.4px;top:46.28px">4.449</span><span class="t cc" style="left:614.2px;width:61.4px;top:46.28px">15.118</span><span class="t cc" style="left:675.6px;width:61.4px;top:46.28px">1592.570</span><span class="t cc" style="left:737.0px;width:61.4px;top:46.28px">0.674</span>
<div class="a" style="left:7px;top:59.09px"><svg width="13" height="12" viewBox="0 0 13 12"><rect x=".5" y=".5" width="11.2" height="10.3" fill="#fff" stroke="#3f6db5" stroke-width="1"/><path d="M2 4.5L3.9 6.4L7.6 2.8" fill="none" stroke="#22a022" stroke-width="1.5"/></svg></div><span class="t" style="left:23px;top:59.32px">4</span><span class="t cc" style="left:61.7px;width:61.4px;top:59.32px;letter-spacing:-0.15px">15:29:57</span><span class="t cc" style="left:123.1px;width:61.4px;top:59.32px">38.026</span><span class="t cc" style="left:184.5px;width:61.4px;top:59.32px">1743.010</span><span class="t cc" style="left:245.9px;width:61.4px;top:59.32px">2.997</span><span class="t cc" style="left:307.3px;width:61.4px;top:59.32px">220.759</span><span class="t cc" style="left:368.6px;width:61.4px;top:59.32px">714.324</span><span class="t cc" style="left:430.0px;width:61.4px;top:59.32px">807.927</span><span class="t cc" style="left:491.4px;width:61.4px;top:59.32px">103.118</span><span class="t cc" style="left:552.8px;width:61.4px;top:59.32px">4.532</span><span class="t cc" style="left:614.2px;width:61.4px;top:59.32px">15.115</span><span class="t cc" style="left:675.6px;width:61.4px;top:59.32px">1588.574</span><span class="t cc" style="left:737.0px;width:61.4px;top:59.32px">0.672</span>
<div class="a" style="left:7px;top:72.12px"><svg width="13" height="12" viewBox="0 0 13 12"><rect x=".5" y=".5" width="11.2" height="10.3" fill="#fff" stroke="#3f6db5" stroke-width="1"/><path d="M2 4.5L3.9 6.4L7.6 2.8" fill="none" stroke="#22a022" stroke-width="1.5"/></svg></div><span class="t" style="left:23px;top:72.36px">5</span><span class="t cc" style="left:61.7px;width:61.4px;top:72.36px;letter-spacing:-0.15px">15:30:12</span><span class="t cc" style="left:123.1px;width:61.4px;top:72.36px">34.965</span><span class="t cc" style="left:184.5px;width:61.4px;top:72.36px">1601.897</span><span class="t cc" style="left:245.9px;width:61.4px;top:72.36px">2.653</span><span class="t cc" style="left:307.3px;width:61.4px;top:72.36px">203.393</span><span class="t cc" style="left:368.6px;width:61.4px;top:72.36px">659.849</span><span class="t cc" style="left:430.0px;width:61.4px;top:72.36px">738.655</span><span class="t cc" style="left:491.4px;width:61.4px;top:72.36px">95.229</span><span class="t cc" style="left:552.8px;width:61.4px;top:72.36px">3.998</span><span class="t cc" style="left:614.2px;width:61.4px;top:72.36px">15.160</span><span class="t cc" style="left:675.6px;width:61.4px;top:72.36px">1450.237</span><span class="t cc" style="left:737.0px;width:61.4px;top:72.36px">0.615</span>
<div class="a" style="left:7px;top:85.15px"><svg width="13" height="12" viewBox="0 0 13 12"><rect x=".5" y=".5" width="11.2" height="10.3" fill="#fff" stroke="#3f6db5" stroke-width="1"/><path d="M2 4.5L3.9 6.4L7.6 2.8" fill="none" stroke="#22a022" stroke-width="1.5"/></svg></div><span class="t" style="left:23px;top:85.40px">6</span><span class="t cc" style="left:61.7px;width:61.4px;top:85.40px;letter-spacing:-0.15px">15:30:17</span><span class="t cc" style="left:123.1px;width:61.4px;top:85.40px">34.981</span><span class="t cc" style="left:184.5px;width:61.4px;top:85.40px">1601.906</span><span class="t cc" style="left:245.9px;width:61.4px;top:85.40px">2.801</span><span class="t cc" style="left:307.3px;width:61.4px;top:85.40px">203.700</span><span class="t cc" style="left:368.6px;width:61.4px;top:85.40px">659.729</span><span class="t cc" style="left:430.0px;width:61.4px;top:85.40px">738.477</span><span class="t cc" style="left:491.4px;width:61.4px;top:85.40px">95.615</span><span class="t cc" style="left:552.8px;width:61.4px;top:85.40px">4.166</span><span class="t cc" style="left:614.2px;width:61.4px;top:85.40px">15.161</span><span class="t cc" style="left:675.6px;width:61.4px;top:85.40px">1449.715</span><span class="t cc" style="left:737.0px;width:61.4px;top:85.40px">0.615</span>
<div class="a" style="left:7px;top:98.18px"><svg width="13" height="12" viewBox="0 0 13 12"><rect x=".5" y=".5" width="11.2" height="10.3" fill="#fff" stroke="#3f6db5" stroke-width="1"/><path d="M2 4.5L3.9 6.4L7.6 2.8" fill="none" stroke="#22a022" stroke-width="1.5"/></svg></div><span class="t" style="left:23px;top:98.44px">7</span><span class="t cc" style="left:61.7px;width:61.4px;top:98.44px;letter-spacing:-0.15px">15:30:32</span><span class="t cc" style="left:123.1px;width:61.4px;top:98.44px">29.019</span><span class="t cc" style="left:184.5px;width:61.4px;top:98.44px">1327.198</span><span class="t cc" style="left:245.9px;width:61.4px;top:98.44px">2.087</span><span class="t cc" style="left:307.3px;width:61.4px;top:98.44px">167.658</span><span class="t cc" style="left:368.6px;width:61.4px;top:98.44px">559.838</span><span class="t cc" style="left:430.0px;width:61.4px;top:98.44px">599.701</span><span class="t cc" style="left:491.4px;width:61.4px;top:98.44px">79.917</span><span class="t cc" style="left:552.8px;width:61.4px;top:98.44px">3.162</span><span class="t cc" style="left:614.2px;width:61.4px;top:98.44px">15.036</span><span class="t cc" style="left:675.6px;width:61.4px;top:98.44px">1186.884</span><span class="t cc" style="left:737.0px;width:61.4px;top:98.44px">0.496</span>
<div class="a" style="left:7px;top:111.21px"><svg width="13" height="12" viewBox="0 0 13 12"><rect x=".5" y=".5" width="11.2" height="10.3" fill="#fff" stroke="#3f6db5" stroke-width="1"/><path d="M2 4.5L3.9 6.4L7.6 2.8" fill="none" stroke="#22a022" stroke-width="1.5"/></svg></div><span class="t" style="left:23px;top:111.48px">8</span><span class="t cc" style="left:61.7px;width:61.4px;top:111.48px;letter-spacing:-0.15px">15:30:50</span><span class="t cc" style="left:123.1px;width:61.4px;top:111.48px">21.875</span><span class="t cc" style="left:184.5px;width:61.4px;top:111.48px">1000.369</span><span class="t cc" style="left:245.9px;width:61.4px;top:111.48px">1.576</span><span class="t cc" style="left:307.3px;width:61.4px;top:111.48px">126.488</span><span class="t cc" style="left:368.6px;width:61.4px;top:111.48px">429.860</span><span class="t cc" style="left:430.0px;width:61.4px;top:111.48px">444.021</span><span class="t cc" style="left:491.4px;width:61.4px;top:111.48px">58.620</span><span class="t cc" style="left:552.8px;width:61.4px;top:111.48px">2.390</span><span class="t cc" style="left:614.2px;width:61.4px;top:111.48px">14.627</span><span class="t cc" style="left:675.6px;width:61.4px;top:111.48px">905.301</span><span class="t cc" style="left:737.0px;width:61.4px;top:111.48px">0.365</span>
<div class="a" style="left:7px;top:124.24px"><svg width="13" height="12" viewBox="0 0 13 12"><rect x=".5" y=".5" width="11.2" height="10.3" fill="#fff" stroke="#3f6db5" stroke-width="1"/><path d="M2 4.5L3.9 6.4L7.6 2.8" fill="none" stroke="#22a022" stroke-width="1.5"/></svg></div><span class="t" style="left:23px;top:124.52px">9</span><span class="t cc" style="left:61.7px;width:61.4px;top:124.52px;letter-spacing:-0.15px">15:31:02</span><span class="t cc" style="left:123.1px;width:61.4px;top:124.52px">20.003</span><span class="t cc" style="left:184.5px;width:61.4px;top:124.52px">914.830</span><span class="t cc" style="left:245.9px;width:61.4px;top:124.52px">1.487</span><span class="t cc" style="left:307.3px;width:61.4px;top:124.52px">115.787</span><span class="t cc" style="left:368.6px;width:61.4px;top:124.52px">394.387</span><span class="t cc" style="left:430.0px;width:61.4px;top:124.52px">404.657</span><span class="t cc" style="left:491.4px;width:61.4px;top:124.52px">52.963</span><span class="t cc" style="left:552.8px;width:61.4px;top:124.52px">2.275</span><span class="t cc" style="left:614.2px;width:61.4px;top:124.52px">14.584</span><span class="t cc" style="left:675.6px;width:61.4px;top:124.52px">827.719</span><span class="t cc" style="left:737.0px;width:61.4px;top:124.52px">0.333</span>
<div class="a" style="left:7px;top:137.27px"><svg width="13" height="12" viewBox="0 0 13 12"><rect x=".5" y=".5" width="11.2" height="10.3" fill="#fff" stroke="#3f6db5" stroke-width="1"/><path d="M2 4.5L3.9 6.4L7.6 2.8" fill="none" stroke="#22a022" stroke-width="1.5"/></svg></div><span class="t" style="left:23px;top:137.56px">10</span><span class="t cc" style="left:61.7px;width:61.4px;top:137.56px;letter-spacing:-0.15px">15:31:21</span><span class="t cc" style="left:123.1px;width:61.4px;top:137.56px">27.332</span><span class="t cc" style="left:184.5px;width:61.4px;top:137.56px">1251.944</span><span class="t cc" style="left:245.9px;width:61.4px;top:137.56px">1.978</span><span class="t cc" style="left:307.3px;width:61.4px;top:137.56px">160.139</span><span class="t cc" style="left:368.6px;width:61.4px;top:137.56px">536.691</span><span class="t cc" style="left:430.0px;width:61.4px;top:137.56px">555.114</span><span class="t cc" style="left:491.4px;width:61.4px;top:137.56px">70.079</span><span class="t cc" style="left:552.8px;width:61.4px;top:137.56px">3.085</span><span class="t cc" style="left:614.2px;width:61.4px;top:137.56px">14.128</span><span class="t cc" style="left:675.6px;width:61.4px;top:137.56px">1175.372</span><span class="t cc" style="left:737.0px;width:61.4px;top:137.56px">0.459</span>
<div id="hsb" class="a"><div class="hthumb"></div></div>
</div>
<div class="thumb" style="left:1015px;top:110px;height:237.5px"></div>
<div id="rp2" class="a"></div>
<div id="cwhite" class="a"></div>
<div id="sptab" class="a"><svg class="a" style="left:6.3px;top:1.8px" width="12" height="12" viewBox="0 0 12 12"><path d="M.9 .8V11.1H10.7" fill="none" stroke="#3c5cb4" stroke-width="1"/><path d="M2.9 10.9Q5 8 7.1 8.2Q9 8.5 9.9 10.5" fill="none" stroke="#4a9a4a" stroke-width=".9"/><path d="M1.3 1.6L5.6 7L9.1 3.5" fill="none" stroke="#3a70c8" stroke-width="1.1"/><path d="M1.1 7Q4 1.5 6.4 2Q9.5 2.5 11 6.6" fill="none" stroke="#d84050" stroke-width="1"/></svg><span class="t" style="left:19px;top:2px">Spectrogram</span></div>
<svg class="a" style="left:296px;top:384px" width="12" height="13" viewBox="0 0 12 13"><rect x=".5" y=".5" width="11" height="12" fill="#c8d878" stroke="#8a9a70"/><rect x="6" y="1" width="5" height="5" fill="#a8c0e8"/><path d="M3 1.5L8 11.5" stroke="#d08020" stroke-width="1.6"/><path d="M1 8L6 12" stroke="#e8c040" stroke-width="1"/></svg>
<span class="t" style="left:310px;top:385px">CRI</span>
<div class="a" style="left:328px;top:385px;width:1px;height:11px;background:#b8b8b8"></div>
<svg class="a" style="left:331.6px;top:384.4px" width="13" height="13" viewBox="0 0 13 13"><path d="M.4 11.4H1.4Q2.3 11.4 2.3 10.2V3.4Q2.3 1 4.1 1Q5.9 1 5.9 3.4V9.8Q5.9 10.8 6.5 10.8Q7.1 10.8 7.1 9.8V3.4Q7.1 1 8.9 1Q10.7 1 10.7 3.4V10.2Q10.7 11.4 11.6 11.4H12.6" fill="none" stroke="#000" stroke-width="1.35"/></svg>
<span class="t" style="left:346px;top:385px;letter-spacing:-0.45px">Flicker</span>
<div class="a" style="left:373px;top:385px;width:1px;height:11px;background:#b8b8b8"></div>
<svg id="chart" class="a" style="left:225px;top:405px" width="791" height="269" viewBox="226 406 791 269">
<defs><linearGradient id="sg" gradientUnits="userSpaceOnUse" x1="288" y1="0" x2="968" y2="0"><stop offset="0.0000" stop-color="#000000"/><stop offset="0.0618" stop-color="#000010"/><stop offset="0.0838" stop-color="#000840"/><stop offset="0.1029" stop-color="#001878"/><stop offset="0.1176" stop-color="#002498"/><stop offset="0.1324" stop-color="#0030b8"/><stop offset="0.1500" stop-color="#003cd8"/><stop offset="0.1691" stop-color="#0040f0"/><stop offset="0.1824" stop-color="#0048ff"/><stop offset="0.2015" stop-color="#0060e8"/><stop offset="0.2279" stop-color="#0078b8"/><stop offset="0.2500" stop-color="#008c96"/><stop offset="0.2735" stop-color="#00a070"/><stop offset="0.2971" stop-color="#10b050"/><stop offset="0.3191" stop-color="#30c040"/><stop offset="0.3485" stop-color="#70e038"/><stop offset="0.3794" stop-color="#a0f830"/><stop offset="0.3956" stop-color="#b0ff30"/><stop offset="0.4206" stop-color="#c8f028"/><stop offset="0.4463" stop-color="#d8d020"/><stop offset="0.4715" stop-color="#d8b818"/><stop offset="0.4968" stop-color="#e0a810"/><stop offset="0.5221" stop-color="#e89808"/><stop offset="0.5471" stop-color="#ff8000"/><stop offset="0.5721" stop-color="#f07000"/><stop offset="0.5976" stop-color="#e05800"/><stop offset="0.6229" stop-color="#d04000"/><stop offset="0.6482" stop-color="#c83000"/><stop offset="0.6735" stop-color="#c02008"/><stop offset="0.6941" stop-color="#b80808"/><stop offset="0.7206" stop-color="#b00000"/><stop offset="0.7588" stop-color="#980000"/><stop offset="0.7926" stop-color="#880000"/><stop offset="0.8353" stop-color="#700000"/><stop offset="0.8691" stop-color="#580000"/><stop offset="0.8956" stop-color="#480000"/><stop offset="0.9338" stop-color="#400000"/><stop offset="1.0000" stop-color="#380404"/></linearGradient></defs>
<rect x="225" y="406" width="792" height="269" fill="#3399ff"/>
<path d="M288.0 650.9C293.3 650.9 311.3 650.9 320.0 650.9C328.7 650.9 334.7 650.8 340.0 650.7C345.3 650.6 348.3 650.5 352.0 650.2C355.7 649.9 359.3 649.4 362.0 649.0C364.7 648.6 366.2 648.3 368.0 647.8C369.8 647.3 371.3 646.9 373.0 646.2C374.7 645.5 376.5 644.5 378.0 643.6C379.5 642.7 380.7 641.9 382.0 640.6C383.3 639.3 384.8 637.5 386.0 635.6C387.2 633.8 388.1 631.7 389.0 629.5C389.9 627.3 390.4 625.8 391.5 622.5C392.6 619.2 394.2 613.8 395.4 609.5C396.6 605.2 397.5 601.4 398.6 597.0C399.7 592.6 400.6 589.6 401.8 583.0C403.0 576.4 404.4 566.3 405.7 557.3C407.0 548.3 408.4 537.0 409.6 529.0C410.8 521.0 412.1 513.6 412.9 509.3C413.7 505.0 414.1 504.4 414.6 503.0C415.1 501.6 415.5 501.1 416.0 501.1C416.5 501.1 417.0 501.6 417.5 503.0C418.0 504.4 418.3 505.4 419.1 509.3C419.9 513.2 421.2 519.7 422.4 526.4C423.6 533.1 425.0 542.7 426.3 549.6C427.6 556.5 428.9 562.9 430.2 567.6C431.5 572.3 432.5 574.7 434.0 577.9C435.5 581.1 437.7 583.9 439.2 586.9C440.7 589.9 441.5 592.5 443.0 595.9C444.5 599.3 446.5 604.6 448.2 607.5C449.9 610.4 451.6 612.1 453.3 613.4C455.0 614.7 456.4 615.6 458.5 615.5C460.6 615.4 463.6 614.2 466.2 612.7C468.8 611.2 471.4 609.0 474.0 606.2C476.6 603.4 479.1 599.8 481.7 595.9C484.3 592.0 486.8 586.9 489.4 583.0C492.0 579.1 494.5 575.9 497.1 572.7C499.7 569.5 501.9 566.5 504.9 563.7C507.9 560.9 511.8 558.3 515.2 556.0C518.6 553.7 522.1 551.9 525.5 550.0C528.9 548.1 532.4 546.5 535.8 544.9C539.2 543.3 543.1 542.1 546.1 540.5C549.1 538.9 551.4 537.0 553.7 535.5C556.0 534.0 557.7 533.0 560.0 531.5C562.3 530.0 564.0 529.0 567.5 526.4C571.0 523.8 576.6 520.1 581.2 516.1C585.8 512.1 590.3 507.0 594.9 502.4C599.5 497.8 604.0 492.9 608.6 488.6C613.2 484.3 617.8 480.1 622.4 476.6C627.0 473.1 632.1 469.6 636.1 467.4C640.1 465.2 643.2 464.5 646.4 463.6C649.5 462.7 652.1 462.1 655.0 462.2C657.9 462.2 659.9 462.2 663.6 463.9C667.3 465.6 672.7 468.6 677.3 472.2C681.9 475.8 687.0 481.8 691.0 485.2C695.0 488.6 698.1 491.1 701.3 492.8C704.4 494.5 707.3 495.5 709.9 495.5C712.5 495.5 714.5 494.8 716.8 492.8C719.1 490.8 721.4 487.3 723.6 483.5C725.8 479.7 728.0 475.1 730.0 470.0C732.0 464.9 733.9 458.4 735.6 453.0C737.3 447.6 739.2 440.9 740.4 437.5C741.6 434.1 742.0 433.5 742.6 432.3C743.2 431.1 743.7 430.3 744.3 430.3C744.9 430.3 745.3 430.8 746.0 432.5C746.7 434.2 747.4 434.9 748.4 440.5C749.4 446.1 751.0 456.8 752.3 466.0C753.6 475.2 754.8 486.0 756.0 496.0C757.2 506.0 758.5 516.7 759.8 526.0C761.0 535.3 762.2 544.3 763.5 552.0C764.8 559.7 765.8 565.6 767.4 572.0C769.0 578.4 771.3 585.5 773.3 590.5C775.3 595.5 777.0 598.7 779.3 602.2C781.6 605.7 784.2 608.6 787.0 611.3C789.8 614.0 793.1 616.3 796.0 618.2C798.9 620.1 801.1 621.6 804.4 622.7C807.6 623.8 811.8 624.4 815.5 624.9C819.2 625.4 823.0 625.7 826.7 625.7C830.4 625.7 834.1 625.4 837.8 624.9C841.5 624.4 845.9 623.4 849.0 623.0C852.1 622.6 853.9 622.3 856.4 622.7C858.9 623.1 861.4 623.9 863.9 625.3C866.4 626.7 868.8 629.2 871.3 631.2C873.8 633.2 876.2 635.7 878.7 637.6C881.2 639.5 883.4 641.0 886.2 642.4C889.0 643.8 891.8 644.8 895.5 645.7C899.2 646.6 903.9 647.1 908.5 647.6C913.1 648.1 917.2 648.5 923.4 648.8C929.6 649.1 938.4 649.3 945.7 649.5C953.1 649.7 963.9 649.8 967.5 649.9L967.5 652.5L288 652.5Z" fill="url(#sg)"/>
<path d="M261.8 430.5V652.5H984.5" fill="none" stroke="#fff" stroke-width="1"/>
<path d="M332.4 652V649.5M402.9 652V649.5M473.5 652V649.5M544.1 652V649.5M614.6 652V649.5M685.2 652V649.5M755.8 652V649.5M826.4 652V649.5M896.9 652V649.5M967.5 652V649.5M262 607.9H265M262 563.5H265M262 519.1H265M262 474.7H265M262 430.3H265" fill="none" stroke="#fff" stroke-width="1"/>
<path d="M743.5 430V652" stroke="#d8d8d8" stroke-width="1.1"/>
<path d="M977.7 431V546.5" stroke="#c8d4e4" stroke-width="1"/><path d="M977.7 546.5V645.5" stroke="#b03040" stroke-width="1.2"/><path d="M977.7 645.5V652" stroke="#30c060" stroke-width="1.2"/>
<g font-family="'Liberation Sans',sans-serif" font-size="11px" fill="#081a36">
<text x="261.6" y="665.5" text-anchor="middle">350</text><text x="332.2" y="665.5" text-anchor="middle">395</text><text x="402.7" y="665.5" text-anchor="middle">440</text><text x="473.3" y="665.5" text-anchor="middle">485</text><text x="543.9" y="665.5" text-anchor="middle">530</text><text x="614.5" y="665.5" text-anchor="middle">575</text><text x="685.0" y="665.5" text-anchor="middle">620</text><text x="755.6" y="665.5" text-anchor="middle">665</text><text x="826.2" y="665.5" text-anchor="middle">710</text><text x="896.7" y="665.5" text-anchor="middle">755</text><text x="967.3" y="665.5" text-anchor="middle">800</text>
<text x="259" y="611.9" text-anchor="end">0.2</text><text x="259" y="567.5" text-anchor="end">0.4</text><text x="259" y="523.1" text-anchor="end">0.6</text><text x="259" y="478.7" text-anchor="end">0.8</text><text x="259" y="434.3" text-anchor="end">1.0</text>
<text x="271.5" y="417.7" font-size="11.4px">Wave: 657.0nm Value: 252.588uW/cm²/nm</text>
</g>
</svg>
<div class="xbtn" style="left:1008.8px;top:386.7px"><svg width="8" height="8" viewBox="0 0 8 8"><path d="M1 1L7 7M7 1L1 7" stroke="#000" stroke-width="1.7"/></svg></div>
<span class="t" style="left:-20.5px;top:687.8px;font-size:9px;letter-spacing:0;color:#000">Ready</span><span class="t" style="left:697px;top:687.8px;font-size:9px;letter-spacing:0;color:#000">Listening</span>
</body></html>
